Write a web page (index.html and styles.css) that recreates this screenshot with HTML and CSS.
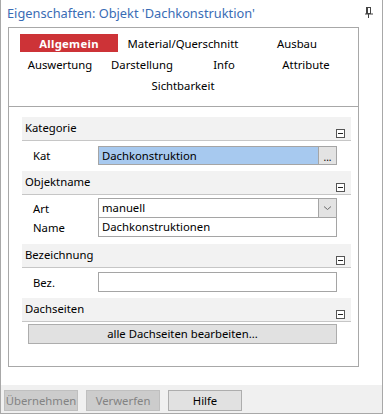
FILE: index.html
```html
<!DOCTYPE html>
<html lang="de">
<head>
<meta charset="utf-8">
<title>Eigenschaften</title>
<link rel="stylesheet" href="styles.css">
</head>
<body>
<div class="window">
  <div class="titlebar">
    <span class="title">Eigenschaften: Objekt 'Dachkonstruktion'</span>
    <svg class="pin" width="8" height="11" viewBox="0 0 8 11">
      <rect x="1.5" y="0.5" width="4" height="6" fill="none" stroke="#444"/>
      <rect x="1.5" y="0.5" width="1.5" height="6" fill="#444"/>
      <line x1="0" y1="7" x2="8" y2="7" stroke="#444" stroke-width="1"/>
      <line x1="3.5" y1="7" x2="3.5" y2="11" stroke="#444" stroke-width="1"/>
    </svg>
  </div>
  <div class="panel">
    <div class="tabs">
      <div class="tabrow r1">
        <span class="tab active">Allgemein</span>
        <span class="tab">Material/Querschnitt</span>
        <span class="tab">Ausbau</span>
      </div>
      <div class="tabrow r2">
        <span class="tab">Auswertung</span>
        <span class="tab">Darstellung</span>
        <span class="tab">Info</span>
        <span class="tab">Attribute</span>
      </div>
      <div class="tabrow r3">
        <span class="tab">Sichtbarkeit</span>
      </div>
    </div>
    <div class="content">
      <div class="sec-head"><span>Kategorie</span><i class="minus"></i></div>
      <div class="row kat">
        <span class="label">Kat</span>
        <div class="field combo">
          <span class="val selected">Dachkonstruktion</span>
          <span class="btn-dots">...</span>
        </div>
      </div>

      <div class="sec-head gap-top"><span>Objektname</span><i class="minus"></i></div>
      <div class="row art">
        <span class="label">Art</span>
        <div class="field combo">
          <span class="val">manuell</span>
          <span class="btn-arrow">
            <svg width="9" height="6" viewBox="0 0 9 6"><path d="M1 1.5 L4.5 4.5 L8 1.5" fill="none" stroke="#6d6d6d" stroke-width="1"/></svg>
          </span>
        </div>
      </div>
      <div class="row name">
        <span class="label">Name</span>
        <div class="field"><span class="val">Dachkonstruktionen</span></div>
      </div>

      <div class="sec-head gap-top2"><span>Bezeichnung</span><i class="minus"></i></div>
      <div class="row bez">
        <span class="label">Bez.</span>
        <div class="field"><span class="val"></span></div>
      </div>

      <div class="sec-head gap-top"><span>Dachseiten</span><i class="minus"></i></div>
      <div class="row">
        <div class="wide-btn" role="button">alle Dachseiten bearbeiten...</div>
      </div>
    </div>
  </div>
  <div class="footer">
    <div class="fbtn disabled" role="button">Übernehmen</div>
    <div class="fbtn disabled" role="button">Verwerfen</div>
    <div class="fbtn" role="button">Hilfe</div>
  </div>
</div>
</body>
</html>
```
FILE: styles.css
```css
* { box-sizing: border-box; }
html, body { margin: 0; padding: 0; background: #fff; }
body {
  font-family: "Noto Sans", "Open Sans", sans-serif;
  font-size: 11.3px;
  color: #000;
}
.window {
  width: 383px;
  height: 414px;
  border-left: 1px solid #a8a8a8;
  border-right: 1px solid #a8a8a8;
  border-bottom: 1px solid #a8a8a8;
  display: flex;
  flex-direction: column;
  background: #fff;
}
.titlebar {
  height: 27px;
  position: relative;
  padding-left: 6px;
  display: flex;
  align-items: center;
}
.title {
  font-size: 12.8px;
  color: #3a6cb5;
  margin-top: -1px;
}
.pin {
  position: absolute;
  left: 364px;
  top: 7px;
}
.panel {
  margin-left: 7px;
  width: 351px;
  height: 340px;
  border: 1px solid #a8a8a8;
}
.tabs {
  height: 79px;
  border-bottom: 1px solid #a8a8a8;
  padding: 6px 0 0 11px;
}
.tabrow {
  display: grid;
  height: 18px;
  margin-bottom: 3px;
}
.tab {
  display: flex;
  align-items: center;
  justify-content: center;
  height: 18px;
  white-space: nowrap;
}
.r1 { grid-template-columns: 98px 98px 98px; column-gap: 16px; }
.r2 { grid-template-columns: 80px 80px 80px 80px; column-gap: 2px; }
.r3 { grid-template-columns: 326px; }
.tab.active {
  background: #cd3337;
  color: #fff;
  font-weight: bold;
  letter-spacing: 0.3px;
}
.content {
  padding: 10px 7px 0 13px;
}
.sec-head {
  height: 24px;
  background: #f2f2f2;
  border-bottom: 1px solid #c6c6c6;
  padding-left: 3px;
  position: relative;
  display: flex;
  align-items: center;
}
.sec-head span { margin-top: -2px; }
.gap-top { margin-top: 6px; }
.gap-top2 { margin-top: 7px; }
.minus {
  position: absolute;
  right: 6px;
  top: 12px;
  width: 9px;
  height: 9px;
  border: 1px solid #555;
  background: #fff;
}
.minus::after {
  content: "";
  position: absolute;
  left: 1px;
  right: 1px;
  top: 3px;
  height: 1px;
  background: #222;
}
.row {
  display: flex;
  align-items: center;
  height: 20px;
}
.row.kat { margin-top: 5px; height: 19px; }
.row.art { margin-top: 3px; }
.row.name { margin-top: -1px; }
.row.bez { margin-top: 4px; }
.label {
  width: 76px;
  padding-left: 11px;
}
.field {
  width: 239px;
  height: 100%;
  border: 1px solid #a5a5a5;
  display: flex;
  background: #fff;
}
.val {
  flex: 1;
  display: flex;
  align-items: center;
  padding-left: 3px;
  padding-bottom: 1px;
}
.val.selected { background: #a7c9ef; }
.btn-dots, .btn-arrow {
  width: 18px;
  border-left: 1px solid #a5a5a5;
  background: #e3e3e3;
  display: flex;
  align-items: center;
  justify-content: center;
}
.btn-dots { font-size: 10px; padding-top: 3px; }
.wide-btn {
  margin: 4px 0 0 6px;
  width: 309px;
  height: 20px;
  background: #e1e1e1;
  border: 1px solid #adadad;
  display: flex;
  align-items: center;
  justify-content: center;
  padding-bottom: 1px;
}
.footer {
  margin-top: auto;
  height: 28px;
  background: #f0f0f0;
  display: flex;
  align-items: flex-start;
  gap: 8px;
  padding: 5px 0 0 3px;
}
.fbtn {
  width: 74px;
  height: 21px;
  background: #e1e1e1;
  border: 1px solid #adadad;
  display: flex;
  align-items: center;
  justify-content: center;
  padding-bottom: 1px;
}
.fbtn.disabled {
  background: #cccccc;
  border-color: #bfbfbf;
  color: #838383;
}
```
